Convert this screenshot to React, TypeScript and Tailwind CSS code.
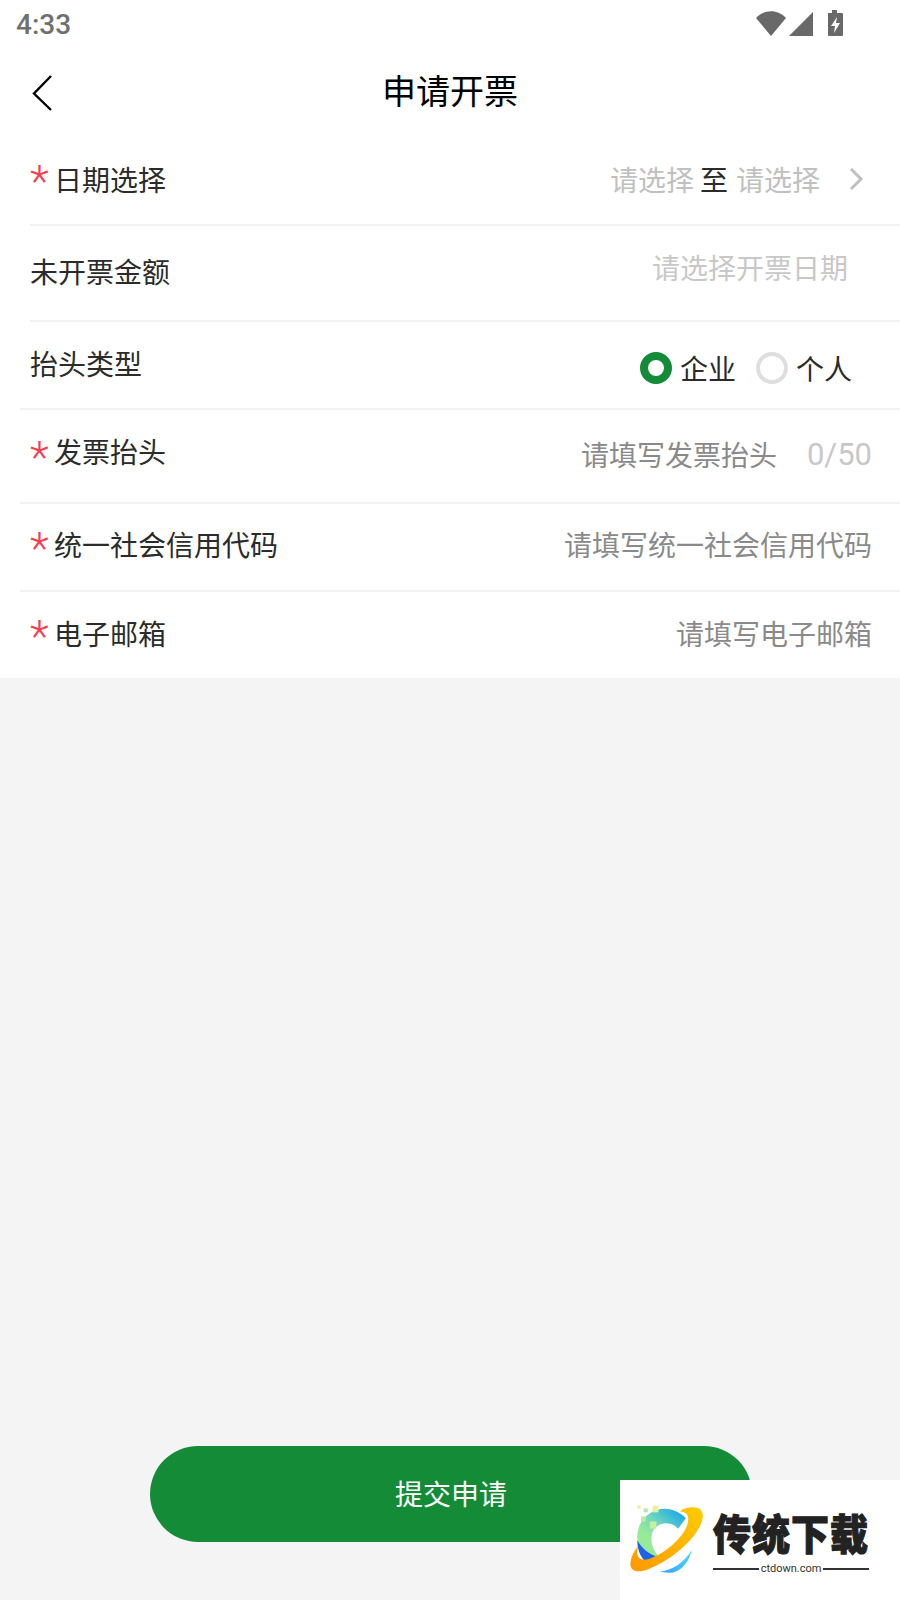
import React from "react";

const font = { fontFamily: '"Noto Sans CJK SC", "Noto Sans", sans-serif' };

function Star() {
  return (
    <span className="w-[24px] h-[40px] text-[44px] leading-[44px] font-light text-[#fb3a4e] shrink-0" style={{ fontFamily: '"Roboto", sans-serif' }}>
      *
    </span>
  );
}

function Logo() {
  return (
    <svg width="77" height="72" viewBox="85 100 230 215" className="shrink-0">
      <defs>
        <linearGradient id="c" x1="0.8" y1="0" x2="0.2" y2="0.8">
          <stop offset="0" stopColor="#1fa9e6" />
          <stop offset="0.45" stopColor="#6fd8c0" />
          <stop offset="0.75" stopColor="#98ea98" />
        </linearGradient>
        <linearGradient id="r" x1="0" y1="1" x2="1" y2="0">
          <stop offset="0" stopColor="#ff9800" />
          <stop offset="1" stopColor="#ffcc00" />
        </linearGradient>
        <linearGradient id="s" x1="0" y1="1" x2="1" y2="0">
          <stop offset="0" stopColor="#3aa4ff" />
          <stop offset="1" stopColor="#4adcff" />
        </linearGradient>
      </defs>
      <path d="M258 145 L235 177 C215 155 185 155 165 175 C150 195 150 230 178 262 L150 275 C115 255 105 210 118 170 C135 125 200 90 258 145 Z" fill="url(#c)" />
      <path d="M113 212 C125 235 150 255 178 262 L145 280 C125 270 112 240 113 212 Z" fill="#1f62e6" />
      <path d="M250 118 C290 105 315 115 307 150 C295 200 220 270 140 300 C100 312 85 295 95 265 C100 250 108 238 115 228 C108 255 115 275 145 268 C190 255 250 205 262 165 C270 140 262 125 240 125 Z" fill="url(#r)" />
      <path d="M180 305 C220 300 255 275 275 240 C268 280 235 312 205 308 Z" fill="url(#s)" />
      <rect x="113" y="107" width="10" height="10" fill="#e4f2a4" />
      <rect x="132" y="116" width="12" height="12" fill="#b8e8b0" />
      <rect x="158" y="108" width="18" height="20" fill="#e8f0a0" />
      <rect x="124" y="140" width="14" height="16" fill="#c0e8a0" />
      <rect x="150" y="155" width="20" height="22" fill="#c8eca0" />
    </svg>
  );
}

export default function App() {
  return (
    <div className="relative w-[900px] h-[1600px] flex flex-col bg-[#f4f4f4] overflow-hidden" style={font}>
      <div className="bg-white flex flex-col">
        {/* status bar */}
        <div className="h-[50px] flex items-center pl-[16px] pr-[57px] justify-between">
          <span className="text-[28px] font-medium text-[#707070]" style={{ fontFamily: '"Roboto", sans-serif' }}>4:33</span>
          <svg width="87" height="27" viewBox="0 0 87 27" className="mb-[3px]">
            <path d="M0 8 C8 -1 22 -1 30 8 L15 26 Z" fill="#696969" />
            <path d="M33 26 L57 2 L57 26 Z" fill="#696969" />
            <path d="M72 3 H76 V0 H81 V3 H86 A1 1 0 0 1 87 4 V25 A1 1 0 0 1 86 26 H73 A1 1 0 0 1 72 25 Z" fill="#696969" />
            <path d="M81 7 L75 16 H79 L78 23 L84 13 H80 Z" fill="#ffffff" />
          </svg>
        </div>
        {/* nav */}
        <div className="h-[85px] flex items-center relative">
          <svg width="24" height="38" viewBox="0 0 24 38" className="ml-[31px] mt-[1px]">
            <path d="M20 2 L3 19.5 L20 36" fill="none" stroke="#000" strokeWidth="2.4" />
          </svg>
          <span className="absolute left-0 right-0 text-center text-[34px] leading-[44px] pb-[6px] text-black">申请开票</span>
        </div>

        {/* 日期选择 */}
        <div className="h-[89px] ml-[30px] flex items-center">
          <Star />
          <span className="text-[28px] text-[#2b2b2b] pb-[2px]">日期选择</span>
          <div className="ml-auto flex items-center pr-[36px] text-[28px] pb-[2px]">
            <span className="text-[#c0c0c0]">请选择</span>
            <span className="text-[#2b2b2b] ml-[6px] mr-[8px]">至</span>
            <span className="text-[#c0c0c0]">请选择</span>
            <svg width="16" height="24" viewBox="0 0 16 24" className="ml-[28px]">
              <path d="M3 2 L13 12 L3 22" fill="none" stroke="#c0c0c0" strokeWidth="3" />
            </svg>
          </div>
        </div>
        <div className="h-[2px] ml-[30px] bg-[#f1f1f1]" />

        {/* 未开票金额 */}
        <div className="h-[94px] ml-[30px] flex justify-between pr-[52px]">
          <span className="text-[28px] text-[#2b2b2b] self-center pb-[5px]">未开票金额</span>
          <span className="text-[28px] text-[#c8c8c8] self-center pb-[13px]">请选择开票日期</span>
        </div>
        <div className="h-[2px] ml-[30px] bg-[#f1f1f1]" />

        {/* 抬头类型 */}
        <div className="h-[86px] ml-[30px] flex justify-between pr-[48px]">
          <span className="text-[28px] text-[#2b2b2b] self-center pb-[5px]">抬头类型</span>
          <div className="flex items-center self-center pt-[5px] text-[28px] text-[#2b2b2b]">
            <span className="w-[32px] h-[32px] rounded-full border-[8px] border-[#138b37] bg-white mr-[8px]" />
            <span>企业</span>
            <span className="w-[32px] h-[32px] rounded-full border-[4px] border-[#dedede] bg-white ml-[20px] mr-[8px]" />
            <span>个人</span>
          </div>
        </div>
        <div className="h-[2px] ml-[20px] bg-[#f1f1f1]" />

        {/* 发票抬头 */}
        <div className="h-[92px] ml-[20px] pl-[10px] pr-[28px] flex items-center">
          <Star />
          <span className="text-[28px] text-[#2b2b2b] pb-[10px]">发票抬头</span>
          <span className="ml-auto text-[28px] text-[#8a8a8a] pb-[5px]">请填写发票抬头</span>
          <span className="ml-[30px] text-[31px] text-[#c8c8c8] pb-[1px]" style={{ fontFamily: '"Roboto", sans-serif' }}>0/50</span>
        </div>
        <div className="h-[2px] ml-[20px] bg-[#f1f1f1]" />

        {/* 统一社会信用代码 */}
        <div className="h-[86px] ml-[20px] pl-[10px] pr-[28px] flex items-center">
          <Star />
          <span className="text-[28px] text-[#2b2b2b] pb-[6px]">统一社会信用代码</span>
          <span className="ml-auto text-[28px] text-[#8a8a8a] pb-[6px]">请填写统一社会信用代码</span>
        </div>
        <div className="h-[2px] ml-[20px] bg-[#f1f1f1]" />

        {/* 电子邮箱 */}
        <div className="h-[86px] ml-[20px] pl-[10px] pr-[28px] flex items-center">
          <Star />
          <span className="text-[28px] text-[#2b2b2b] pb-[4px]">电子邮箱</span>
          <span className="ml-auto text-[28px] text-[#8a8a8a] pb-[4px]">请填写电子邮箱</span>
        </div>
      </div>

      <div className="flex-1" />

      <div className="flex justify-center pb-[58px] pl-[2px]">
        <div className="w-[602px] h-[96px] rounded-[48px] bg-[#138b37] flex items-center justify-center text-white text-[28px] pb-[2px]">
          提交申请
        </div>
      </div>

      {/* watermark */}
      <div className="absolute right-0 bottom-0 w-[280px] h-[120px] bg-white flex items-start pl-[8px] pt-[23px]">
        <Logo />
        <div className="flex flex-col ml-[8px] mt-[4px] w-[156px]">
          <span className="text-[38px] leading-[46px] font-black text-[#222] tracking-[1px] scale-y-[1.1] origin-top [-webkit-text-stroke:1px_#222]">传统下载</span>
          <div className="flex items-center mt-[8px]">
            <span className="h-[2px] flex-1 bg-[#333]" />
            <span className="text-[11px] leading-[16px] mx-[2px] text-[#333]" style={{ fontFamily: '"Roboto", sans-serif' }}>ctdown.com</span>
            <span className="h-[2px] flex-1 bg-[#333]" />
          </div>
        </div>
      </div>
    </div>
  );
}
